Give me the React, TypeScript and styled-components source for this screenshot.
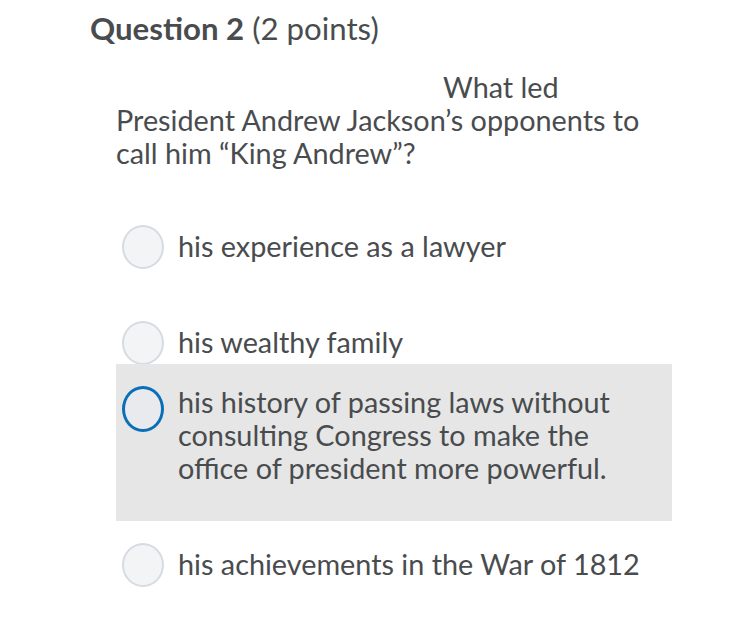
import React from "react";
import styled, { createGlobalStyle } from "styled-components";

const Global = createGlobalStyle`
  html, body { margin: 0; padding: 0; background: #ffffff; }
  body { font-family: Lato, "Open Sans", sans-serif; color: #494c4e; }
`;

const Page = styled.div`
  width: 750px;
  height: 632px;
  box-sizing: border-box;
  padding: 11px 0 0 90px;
`;

const Header = styled.h2`
  margin: 0;
  font-size: 31.2px;
  line-height: 34px;
  font-weight: 400;
  color: #494c4e;
`;

const Strong = styled.span`
  font-weight: 700;
`;

const Prompt = styled.div`
  margin: 26px 0 0 26px;
  font-size: 28.8px;
  line-height: 33px;
`;

const PromptLine = styled.div<{ $indent?: number }>`
  padding-left: ${(p) => p.$indent ?? 0}px;
`;

const List = styled.div`
  display: flex;
  flex-direction: column;
  margin: 60px 0 0 26px;
  width: 556px;
`;

const Option = styled.div<{ $selected?: boolean; $gap: number }>`
  display: flex;
  align-items: flex-start;
  gap: 14px;
  margin-top: ${(p) => p.$gap}px;
  padding: ${(p) => (p.$selected ? "22px 30px 36px 6px" : "0 30px 0 6px")};
  background: ${(p) => (p.$selected ? "#e6e6e6" : "transparent")};
`;

const Radio = styled.span<{ $selected?: boolean }>`
  flex: none;
  box-sizing: border-box;
  width: 42px;
  height: ${(p) => (p.$selected ? 46 : 44)}px;
  margin: ${(p) => (p.$selected ? "0" : "-5px 0 -6px")};
  border-radius: 50%;
  background: ${(p) => (p.$selected ? "#e8eaee" : "#f3f4f6")};
  border: ${(p) => (p.$selected ? "3px solid #0a6fb8" : "2px solid #d6dbe3")};
`;

const Label = styled.span`
  font-size: 28.8px;
  line-height: 33px;
  color: #494c4e;
`;

const options = [
  { text: "his experience as a lawyer", gap: 0 },
  { text: "his wealthy family", gap: 63 },
  {
    text: "his history of passing laws without consulting Congress to make the office of president more powerful.",
    gap: 5,
    selected: true,
  },
  { text: "his achievements in the War of 1812", gap: 27 },
];

export default function App() {
  return (
    <Page>
      <Global />
      <Header>
        <Strong>Question 2</Strong> (2 points)
      </Header>
      <Prompt>
        <PromptLine $indent={327}>What led</PromptLine>
        <PromptLine>President Andrew Jackson’s opponents to</PromptLine>
        <PromptLine>call him “King Andrew”?</PromptLine>
      </Prompt>
      <List>
        {options.map((o) => (
          <Option key={o.text} $selected={o.selected} $gap={o.gap}>
            <Radio $selected={o.selected} />
            <Label>{o.text}</Label>
          </Option>
        ))}
      </List>
    </Page>
  );
}
